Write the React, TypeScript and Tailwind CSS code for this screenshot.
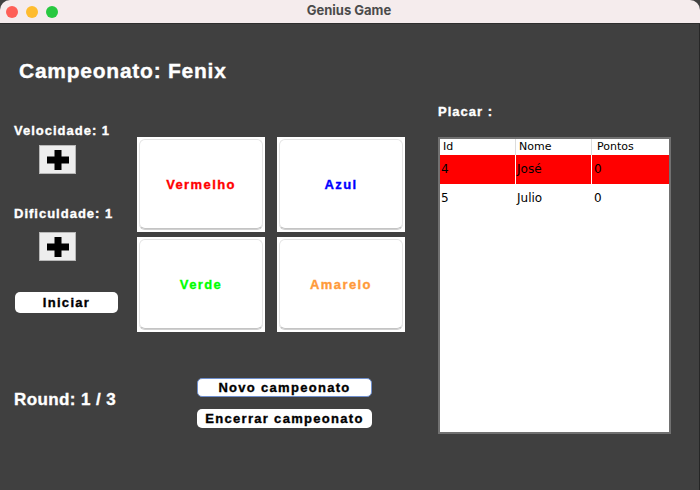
import React from "react";

const bold =
  "font-['Liberation_Sans',Arial,sans-serif] font-bold [-webkit-text-stroke:0.35px_currentColor]";

const colorCards = [
  { label: "Vermelho", color: "text-[#ff0000]" },
  { label: "Azul", color: "text-[#0000ff]" },
  { label: "Verde", color: "text-[#00ff00]" },
  { label: "Amarelo", color: "text-[#ff9a3a]" },
];

const players = [
  { id: 4, nome: "José", pontos: 0, active: true },
  { id: 5, nome: "Julio", pontos: 0, active: false },
];

function PlusButton() {
  return (
    <div className="ml-[25px] w-[37px] h-[29px] bg-[#ededed] border border-[#b8b8b8] flex items-center justify-center">
      <svg width="22" height="20" viewBox="0 0 22 20">
        <rect x="7.5" y="0" width="7" height="20" fill="#000" />
        <rect x="0" y="6.5" width="22" height="7" fill="#000" />
      </svg>
    </div>
  );
}

function WhiteButton({ label, className = "" }: { label: string; className?: string }) {
  return (
    <div
      className={`bg-white rounded-[5px] flex items-center justify-center text-[13px] leading-none tracking-[1.3px] text-black ${bold} ${className}`}
    >
      {label}
    </div>
  );
}

export default function App() {
  return (
    <div className="w-[700px] h-[490px] bg-[#404040] flex flex-col overflow-hidden">
      {/* Title bar */}
      <div className="h-[24px] shrink-0 bg-[#f5eced] border-b border-[#2e2e2e] rounded-t-[10px] flex items-center">
        <div className="flex items-center gap-[8px] pl-[6px]">
          <span className="w-[12px] h-[12px] rounded-full bg-[#fe5f57]" />
          <span className="w-[12px] h-[12px] rounded-full bg-[#febc2e]" />
          <span className="w-[12px] h-[12px] rounded-full bg-[#28c840]" />
        </div>
        <div className="flex-1 text-center pr-[60px] -mt-[1px] text-[13px] font-bold text-[#4b4b4b] font-['Inter',sans-serif]">
          Genius Game
        </div>
      </div>

      {/* Body */}
      <div className="flex-1 flex border-r border-[#262626]">
        {/* Left side */}
        <div className="w-[438px] pl-[14px] flex flex-col">
          <div className={`mt-[36px] ml-[5px] text-[21px] leading-none tracking-[0.75px] text-white ${bold}`}>
            Campeonato: Fenix
          </div>

          <div className="mt-[43px] flex items-start">
            {/* Controls */}
            <div className="w-[123px] flex flex-col">
              <div className={`text-[13px] leading-none tracking-[1px] text-white ${bold}`}>Velocidade: 1</div>
              <div className="mt-[8px]">
                <PlusButton />
              </div>
              <div className={`mt-[33px] text-[13px] leading-none tracking-[1px] text-white ${bold}`}>Dificuldade: 1</div>
              <div className="mt-[12px]">
                <PlusButton />
              </div>
              <WhiteButton label="Iniciar" className="mt-[31px] ml-[1px] w-[103px] h-[21px]" />
            </div>

            {/* Color cards */}
            <div className="mt-[13px] grid grid-cols-[128px_128px] gap-x-[12px] gap-y-[5px]">
              {colorCards.map((c) => (
                <div key={c.label} className="w-[128px] h-[95px] bg-white p-[2px] pb-[3px]">
                  <div className="w-full h-full rounded-[6px] border border-[#e4e4e4] border-b-[#c4c4c4] shadow-[0_1px_0_#d0d0d0] flex items-center justify-center">
                    <span className={`text-[13px] leading-none tracking-[1.4px] ${bold} ${c.color}`}>{c.label}</span>
                  </div>
                </div>
              ))}
            </div>
          </div>

          {/* Bottom row */}
          <div className="mt-[46px] flex items-start">
            <div className={`w-[183px] mt-[13px] text-[17px] leading-none tracking-[0.4px] text-white ${bold}`}>
              Round: 1 / 3
            </div>
            <div className="flex flex-col gap-[12px]">
              <WhiteButton label="Novo campeonato" className="w-[175px] h-[19px] border border-[#6f8fce]" />
              <WhiteButton label="Encerrar campeonato" className="w-[175px] h-[19px]" />
            </div>
          </div>
        </div>

        {/* Right side: scoreboard */}
        <div className="flex flex-col">
          <div className={`mt-[81px] text-[13px] leading-none tracking-[1px] text-white ${bold}`}>Placar :</div>
          <div className="mt-[19px] w-[233px] h-[297px] border-2 border-[#717171] bg-white font-['DejaVu_Sans',sans-serif] text-black">
            <div className="grid grid-cols-[76px_76px_77px] h-[16px] text-[11px] leading-[16px]">
              <div className="pl-[3px] border-r border-[#dcdcdc]">Id</div>
              <div className="pl-[3px] border-r border-[#dcdcdc]">Nome</div>
              <div className="pl-[5px]">Pontos</div>
            </div>
            {players.map((p) => (
              <div
                key={p.id}
                className={`grid grid-cols-[76px_76px_77px] h-[29px] text-[12px] leading-[29px] ${
                  p.active ? "bg-[#ff0000]" : "bg-white"
                }`}
              >
                <div className="pl-[1px] border-r border-white">{p.id}</div>
                <div className="pl-[1px] border-r border-white">{p.nome}</div>
                <div className="pl-[2px]">{p.pontos}</div>
              </div>
            ))}
          </div>
        </div>
      </div>
    </div>
  );
}
